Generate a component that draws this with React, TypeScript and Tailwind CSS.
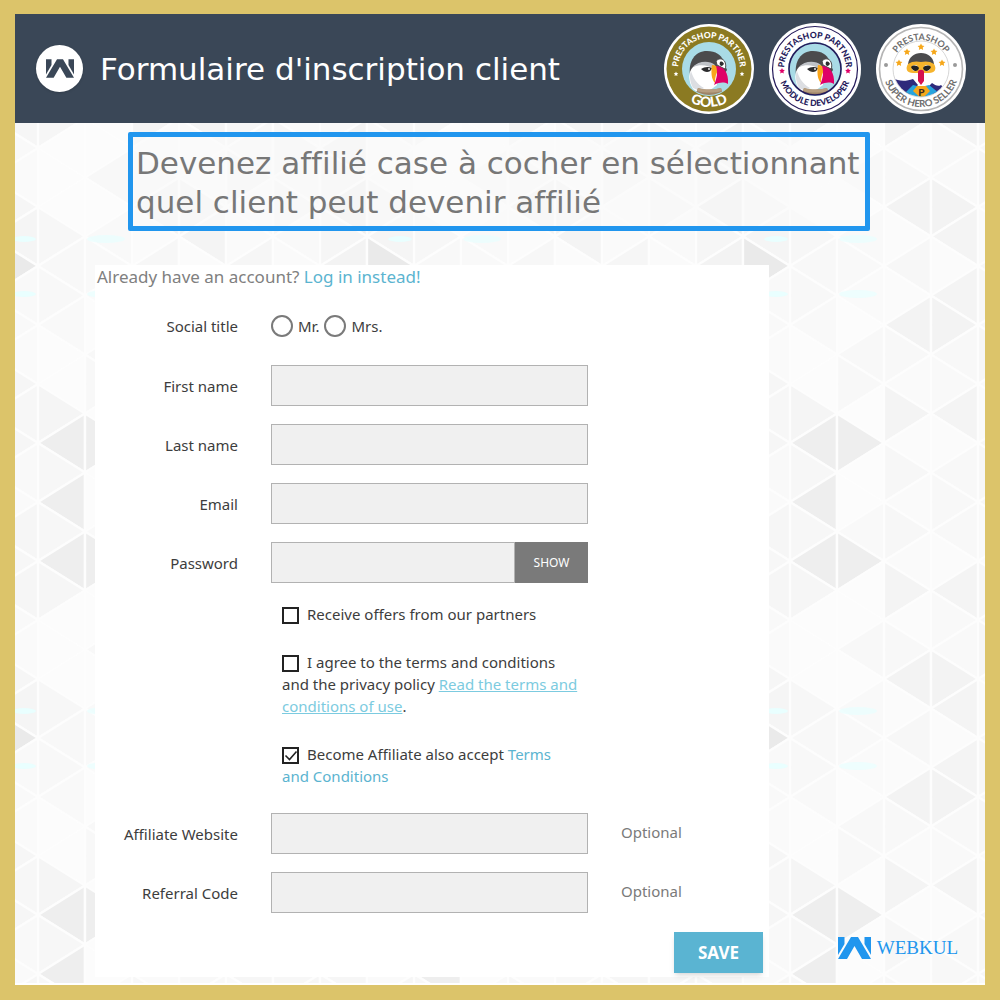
import React from 'react';

const TILE_W = 376;
const TILE_H = 472;
const COL = 47;
const HALF = 29.5;

// shades of single triangles, keyed "strip:step"
const SHADES: Record<string, string> = {
  '0:0': '#f9f9f9', '0:1': '#fcfcfc', '0:2': '#fcfcfc', '0:3': '#f5f5f5', '0:4': '#eeeeee', '0:5': '#f7f7f7',
  '0:6': '#eeeeee', '0:7': '#f7f7f7', '0:8': '#eeeeee', '0:9': '#f6f6f6', '0:10': '#fcfcfc', '0:11': '#fcfcfc',
  '0:12': '#fcfcfc', '0:13': '#f7f7f7', '0:14': '#f8f8f8', '0:15': '#f8f8f8',
  '1:0': '#fcfcfc', '1:1': '#f8f8f8', '1:2': '#f8f8f8', '1:3': '#fcfcfc', '1:4': '#eeeeee', '1:5': '#fcfcfc',
  '1:6': '#fcfcfc', '1:7': '#f9f9f9', '1:8': '#eeeeee', '1:9': '#fcfcfc', '1:10': '#fcfcfc', '1:11': '#f8f8f8',
  '1:12': '#fcfcfc', '1:13': '#f9f9f9', '1:14': '#f9f9f9', '1:15': '#fafafa',
  '2:0': '#f3f3f3', '2:1': '#f8f8f8', '2:2': '#fafafa', '2:3': '#f4f4f4', '2:4': '#fbfbfb', '2:5': '#f7f7f7',
  '2:6': '#fafafa', '2:7': '#f7f7f7', '2:8': '#fafafa', '2:9': '#f4f4f4', '2:10': '#fbfbfb', '2:11': '#f8f8f8',
  '2:12': '#f3f3f3', '2:13': '#fbfbfb', '2:14': '#f7f7f7', '2:15': '#fbfbfb',
  '3:0': '#f3f3f3', '3:1': '#f8f8f8', '3:2': '#f9f9f9', '3:3': '#f4f4f4', '3:4': '#fbfbfb', '3:5': '#f8f8f8',
  '3:6': '#f8f8f8', '3:7': '#f8f8f8', '3:8': '#fbfbfb', '3:9': '#f4f4f4', '3:10': '#f9f9f9', '3:11': '#f9f9f9',
  '3:12': '#f3f3f3', '3:13': '#f4f4f4', '3:14': '#fbfbfb', '3:15': '#f4f4f4',
  '6:12': '#eeeeee', '7:13': '#f5f5f5', '7:14': '#eaeaea', '6:14': '#f3f3f3', '6:10': '#f3f3f3',
};
const FALLBACK = ['#f6f6f6', '#f9f9f9', '#f7f7f7', '#fafafa', '#f6f6f6'];

const triangles: { points: string; fill: string }[] = [];
for (let c = 0; c < 8; c++) {
  for (let h = 0; h <= 16; h++) {
    const left = c * COL;
    const right = left + COL;
    const y = h * HALF;
    const apex = h % 2 === c % 2 ? left : right;
    const base = apex === left ? right : left;
    triangles.push({
      points: `${apex},${y} ${base},${y - HALF} ${base},${y + HALF}`,
      fill: SHADES[`${c}:${h % 16}`] ?? FALLBACK[(c * 3 + (h % 16) * 2) % 5],
    });
  }
}

const Backdrop: React.FC = () => (
  <svg className="absolute inset-0 h-full w-full" aria-hidden="true">
    <defs>
      <pattern id="triangles" x="23" y="202" width={TILE_W} height={TILE_H} patternUnits="userSpaceOnUse">
        {triangles.map((t, i) => (
          <polygon key={i} points={t.points} fill={t.fill} stroke="#fdfdfd" strokeWidth="2.4" strokeLinejoin="round" />
        ))}
        {[386, 441].map((y) => (
          <g key={y} fill="#e9ffff">
            <ellipse cx="362" cy={y} rx="12" ry="3" />
            <ellipse cx="68" cy={y} rx="19" ry="4" opacity="0.7" />
          </g>
        ))}
      </pattern>
    </defs>
    <rect width="100%" height="100%" fill="url(#triangles)" />
  </svg>
);

const Star: React.FC<{ x: number; y: number; r: number; fill: string }> = ({ x, y, r, fill }) => (
  <polygon
    transform={`translate(${x} ${y}) scale(${r})`}
    points="0,-1 .29,-.4 .95,-.31 .48,.15 .59,.81 0,.5 -.59,.81 -.48,.15 -.95,-.31 -.29,-.4"
    fill={fill}
  />
);

const Puffin: React.FC<{ id: string }> = ({ id }) => (
  <g>
    <clipPath id={id}>
      <circle cx="46" cy="46" r="26" />
    </clipPath>
    <circle cx="46" cy="46" r="27" fill="#a9dbe6" />
    <g clipPath={`url(#${id})`}>
      <path d="M27 53C25 38 32 28 44 28c9 0 14 4 16 9l4 10-8 12-27 4z" fill="#4b4b4d" />
      <path d="M30 66c-5-8-5-17 0-22 6-5 15-5 21-2l3 6v14l-8 6H33z" fill="#fff" />
      <path d="M30 65c-3-6-4-12-2-17 2 7 6 13 13 17l-4 3z" fill="#dcdee2" />
      <path d="M30 44c5-6 16-7 22-2l-1 4c-6-4-14-5-21-2z" fill="#bfc2c7" />
      <path d="M53 38c3-3 7-3 9 1 1 3 1 5 0 7l-8-4z" fill="#fff" stroke="#4b4b4d" strokeWidth="1" />
      <path d="M38 46c3-2 7-3 11-1-1 3-3 4-5 4s-4-1-6-3z" fill="#2c2c2e" />
      <circle cx="46" cy="46" r="0.900" fill="#fff" />
      <path d="M57 39c2-1 3 0 4 2l-2 2c-2 0-3-2-2-4z" fill="#2c2c2e" />
      <path d="M49 42c3 0 6 1 7 4-3 4-4 8-4 14-4-4-4-12-3-18z" fill="#f9a51a" />
      <path d="M53 43c7 0 13 6 12 18-4-2-8-2-14 1 3-7 4-13 2-19z" fill="#df0067" />
      <path d="M35 65c7 2 15 2 23 0l3 10H31z" fill="#9e8467" />
      <path d="M35 65c7 2 15 2 23 0l1 3c-8 2-17 2-25 0z" fill="#b79e80" />
    </g>
  </g>
);

const GoldBadge: React.FC = () => (
  <svg viewBox="0 0 92 92" className="h-[92px] w-[92px]" role="img" aria-label="PrestaShop Partner Gold">
    <path id="gold-top" d="M15 46a31 31 0 0 1 62 0" fill="none" />
    <path id="gold-bottom" d="M8 46a38 38 0 0 0 76 0" fill="none" />
    <circle cx="46" cy="46" r="45" fill="#fff" />
    <circle cx="46" cy="46" r="42.500" fill="#8b7a22" />
    <Puffin id="gold-clip" />
    <text fill="#fff" fontFamily="Lato, sans-serif" fontWeight="900" fontSize="8.400" textAnchor="middle">
      <textPath href="#gold-top" startOffset="50%">PRESTASHOP PARTNER</textPath>
    </text>
    <text fill="#fff" fontFamily="Lato, sans-serif" fontWeight="900" fontSize="14" textAnchor="middle">
      <textPath href="#gold-bottom" startOffset="50%">GOLD</textPath>
    </text>
    <Star x={13} y={51} r={2.4} fill="#fff" />
    <Star x={79} y={51} r={2.4} fill="#fff" />
  </svg>
);

const DeveloperBadge: React.FC = () => (
  <svg viewBox="0 0 92 92" className="h-[92px] w-[92px]" role="img" aria-label="PrestaShop Partner Module Developer">
    <path id="dev-top" d="M15 46a31 31 0 0 1 62 0" fill="none" />
    <path id="dev-bottom" d="M9 46a37 37 0 0 0 74 0" fill="none" />
    <circle cx="46" cy="46" r="46" fill="#fff" />
    <circle cx="46" cy="46" r="42.500" fill="none" stroke="#251b5b" strokeWidth="1.200" />
    <Puffin id="dev-clip" />
    <circle cx="46" cy="46" r="26" fill="none" stroke="#251b5b" strokeWidth="1.600" />
    <g fill="#251b5b" fontFamily="Lato, sans-serif" fontWeight="900" fontSize="8.500" textAnchor="middle">
      <text><textPath href="#dev-top" startOffset="50%">PRESTASHOP PARTNER</textPath></text>
      <text><textPath href="#dev-bottom" startOffset="50%">MODULE DEVELOPER</textPath></text>
    </g>
    <Star x={13} y={48} r={3} fill="#df0067" />
    <Star x={79} y={48} r={3} fill="#df0067" />
  </svg>
);

const HeroBadge: React.FC = () => (
  <svg viewBox="0 0 92 92" className="h-[92px] w-[92px]" role="img" aria-label="PrestaShop Super Hero Seller">
    <path id="hero-top" d="M17 46a29 29 0 0 1 58 0" fill="none" />
    <path id="hero-bottom" d="M8 46a38 38 0 0 0 76 0" fill="none" />
    <clipPath id="hero-clip">
      <circle cx="46" cy="46" r="27.500" />
    </clipPath>
    <circle cx="46" cy="46" r="45" fill="#fff" />
    <circle cx="46" cy="46" r="41.500" fill="none" stroke="#b5b5b5" strokeWidth="1.600" />
    <circle cx="46" cy="46" r="28" fill="#fff" stroke="#c4c4c4" strokeWidth="0.700" />
    <g clipPath="url(#hero-clip)">
      <path d="M18 55c5 3 12 4 20 1l5 6-12 14H18z" fill="#2f2a7b" />
      <path d="M66 62c-3 2-6 0-9-2l-4 4 9 12 8-10z" fill="#2f2a7b" />
      <path d="M30 70l8-8 8 2 8-2 10 8 2 8H28z" fill="#27a4dd" />
      <path d="M38 68l4-5h9l4 5-8 8z" fill="#f6a81c" />
    </g>
    <path d="M33 41c1-7 6-11 13-11s12 4 13 11z" fill="#4b4b4d" />
    <path d="M33 41c4-3 9-3 13-2 4-1 9-1 13 2 3 5 1 9-5 9h-16c-6 0-8-4-5-9z" fill="#f6b42c" />
    <circle cx="40" cy="45" r="3" fill="#fff" />
    <circle cx="52" cy="45" r="3" fill="#fff" />
    <path d="M36 44c2-2 6-2 8 1-1 4-6 4-8-1zM56 44c-2-2-6-2-8 1 1 4 6 4 8-1z" fill="#222" />
    <path d="M43 49c0-3 6-3 6 0v9l-3 4-3-4z" fill="#d5114f" />
    <text x="46.500" y="73" fill="#3a2a24" fontFamily="Lato, sans-serif" fontWeight="900" fontSize="10" textAnchor="middle">P</text>
    <Star x={24} y={40} r={3.6} fill="#f6a81c" />
    <Star x={32} y={29} r={3.6} fill="#f6a81c" />
    <Star x={46} y={24} r={3.6} fill="#f6a81c" />
    <Star x={59} y={29} r={3.6} fill="#f6a81c" />
    <Star x={67} y={40} r={3.6} fill="#f6a81c" />
    <g fill="#6d6d6d" fontFamily="Lato, sans-serif" fontWeight="700" textAnchor="middle">
      <text fontSize="9"><textPath href="#hero-top" startOffset="50%">PRESTASHOP</textPath></text>
      <text fontSize="9.600"><textPath href="#hero-bottom" startOffset="50%">SUPER HERO SELLER</textPath></text>
    </g>
    <circle cx="11" cy="42" r="2" fill="#9a9a9a" />
    <circle cx="80" cy="42" r="2" fill="#9a9a9a" />
  </svg>
);

const WebkulMark: React.FC<{ className: string }> = ({ className }) => (
  <svg viewBox="0 0 33 22" className={className} fill="currentColor" aria-hidden="true">
    <path d="M0 0h6.500v7L0 18z" />
    <path d="M33 0h-6.500v7L33 18z" />
    <path d="M13 0h7l13 22h-9l-7.500-13L9 22H0z" />
  </svg>
);

const inputClass = 'h-[41px] w-full min-w-0 border border-[#b2b2b2] bg-[#f0f0f0] px-3 outline-none';
const rowClass = 'grid grid-cols-[143px_minmax(0,317px)_1fr] items-center gap-x-[33px]';
const radioClass = 'h-[22px] w-[22px] appearance-none rounded-full border-2 border-[#7a7a7a]';
const checkClass = 'mr-2 inline-block h-[17px] w-[17px] appearance-none border-2 border-[#232323] align-[-4px]';

interface FieldProps {
  id: string;
  label: string;
  type?: string;
  optional?: boolean;
}

const Field: React.FC<FieldProps> = ({ id, label, type = 'text', optional }) => (
  <div className={rowClass}>
    <label htmlFor={id} className="text-right">{label}</label>
    {type === 'password' ? (
      <div className="flex">
        <input id={id} type="password" className={inputClass} />
        <button type="button" className="w-[73px] shrink-0 bg-[#7a7a7a] text-[12px] text-white">SHOW</button>
      </div>
    ) : (
      <input id={id} type={type} className={inputClass} />
    )}
    {optional && <span className="pb-1 text-[#7a7a7a]">Optional</span>}
  </div>
);

const App: React.FC = () => {
  return (
    <div className="flex min-h-screen flex-col border-[15px] border-t-[14px] border-[#dcc46a] bg-[#f9f9f9]">
      <header className="flex h-[109px] items-center bg-[#3a4757] pl-[21px] pr-[18px]">
        <div className="flex h-[47px] w-[47px] items-center justify-center rounded-full bg-white text-[#3a4757] shadow">
          <WebkulMark className="h-[19px] w-7" />
        </div>
        <h1 className="ml-[17px] flex-1 pt-[2px] font-['DejaVu_Sans',sans-serif] text-[31px] text-white">
          Formulaire d'inscription client
        </h1>
        <div className="flex gap-[14px]">
          <GoldBadge />
          <DeveloperBadge />
          <HeroBadge />
        </div>
      </header>

      <main className="relative flex flex-1 flex-col border-b-2 border-white pb-[6px]">
        <Backdrop />
        <h2 className="relative ml-[113px] mr-[115px] mt-[9px] rounded-xs border-[5px] border-[#2196ee] bg-[#fafafa]/60 pb-[4px] pl-[3px] pt-[7px] font-['DejaVu_Sans',sans-serif] text-[31px] leading-[39px] text-[#777] [font-variant-ligatures:none]">
          Devenez affilié case à cocher en sélectionnant quel client peut devenir affilié
        </h2>

        <div className="relative mt-[34px] flex flex-1 pl-20">
          <form
            className="flex-1 bg-white font-['Noto_Sans',sans-serif] text-[15px] leading-[22px] text-[#3d3d3d]"
            onSubmit={(e) => e.preventDefault()}
          >
            <p className="pl-[2px] text-[17px] leading-6 text-[#808080]">
              Already have an account? <a href="#login" className="text-[#5bb4d0]">Log in instead!</a>
            </p>

            <div className={`${rowClass} mt-[26px]`} role="radiogroup" aria-labelledby="social-title">
              <span id="social-title" className="text-right">Social title</span>
              <div className="flex items-center gap-[5px]">
                <input id="mr" type="radio" name="title" className={radioClass} />
                <label htmlFor="mr">Mr.</label>
                <input id="mrs" type="radio" name="title" className={radioClass} />
                <label htmlFor="mrs">Mrs.</label>
              </div>
            </div>

            <div className="mt-7 flex flex-col gap-[18px]">
              <Field id="first-name" label="First name" />
              <Field id="last-name" label="Last name" />
              <Field id="email" label="Email" type="email" />
              <Field id="password" label="Password" type="password" />
            </div>

            <div className="ml-[187px] mt-5 flex max-w-[298px] flex-col gap-[26px]">
              <div>
                <input id="offers" type="checkbox" className={checkClass} />
                <label htmlFor="offers">Receive offers from our partners</label>
              </div>
              <div>
                <input id="terms" type="checkbox" className={checkClass} />
                <label htmlFor="terms">I agree to the terms and conditions and the privacy policy </label>
                <a href="#terms" className="text-[#7ccbe0] underline">Read the terms and conditions of use</a>.
              </div>
              <div>
                <span className="relative">
                  <input id="affiliate" type="checkbox" defaultChecked className={checkClass} />
                  <svg viewBox="0 0 17 17" className="pointer-events-none absolute left-0 top-[3px] h-[17px] w-[17px]" fill="none" stroke="#232323" strokeWidth="1.600">
                    <path d="M3.500 8.500l4 4 7-8" />
                  </svg>
                </span>
                <label htmlFor="affiliate">Become Affiliate also accept </label>
                <a href="#conditions" className="text-[#5bb4d0]">Terms and Conditions</a>
              </div>
            </div>

            <div className="mt-[26px] flex flex-col gap-[18px]">
              <Field id="website" label="Affiliate Website" optional />
              <Field id="referral" label="Referral Code" optional />
            </div>

            <div className="mt-[19px] flex justify-end pb-1 pr-[6px]">
              <button type="submit" className="h-[41px] w-[89px] bg-[#5ab4d2] text-[17px] font-bold text-white shadow-md">
                SAVE
              </button>
            </div>
          </form>

          <aside className="flex w-[216px] items-end justify-end pb-[17px] pr-[27px]">
            <div className="flex items-center gap-[6px] text-[#2196ee]">
              <WebkulMark className="h-[22px] w-[33px]" />
              <span className="font-['Liberation_Serif',serif] text-[19px] leading-6">WEBKUL</span>
            </div>
          </aside>
        </div>
      </main>
    </div>
  );
};

export default App;
